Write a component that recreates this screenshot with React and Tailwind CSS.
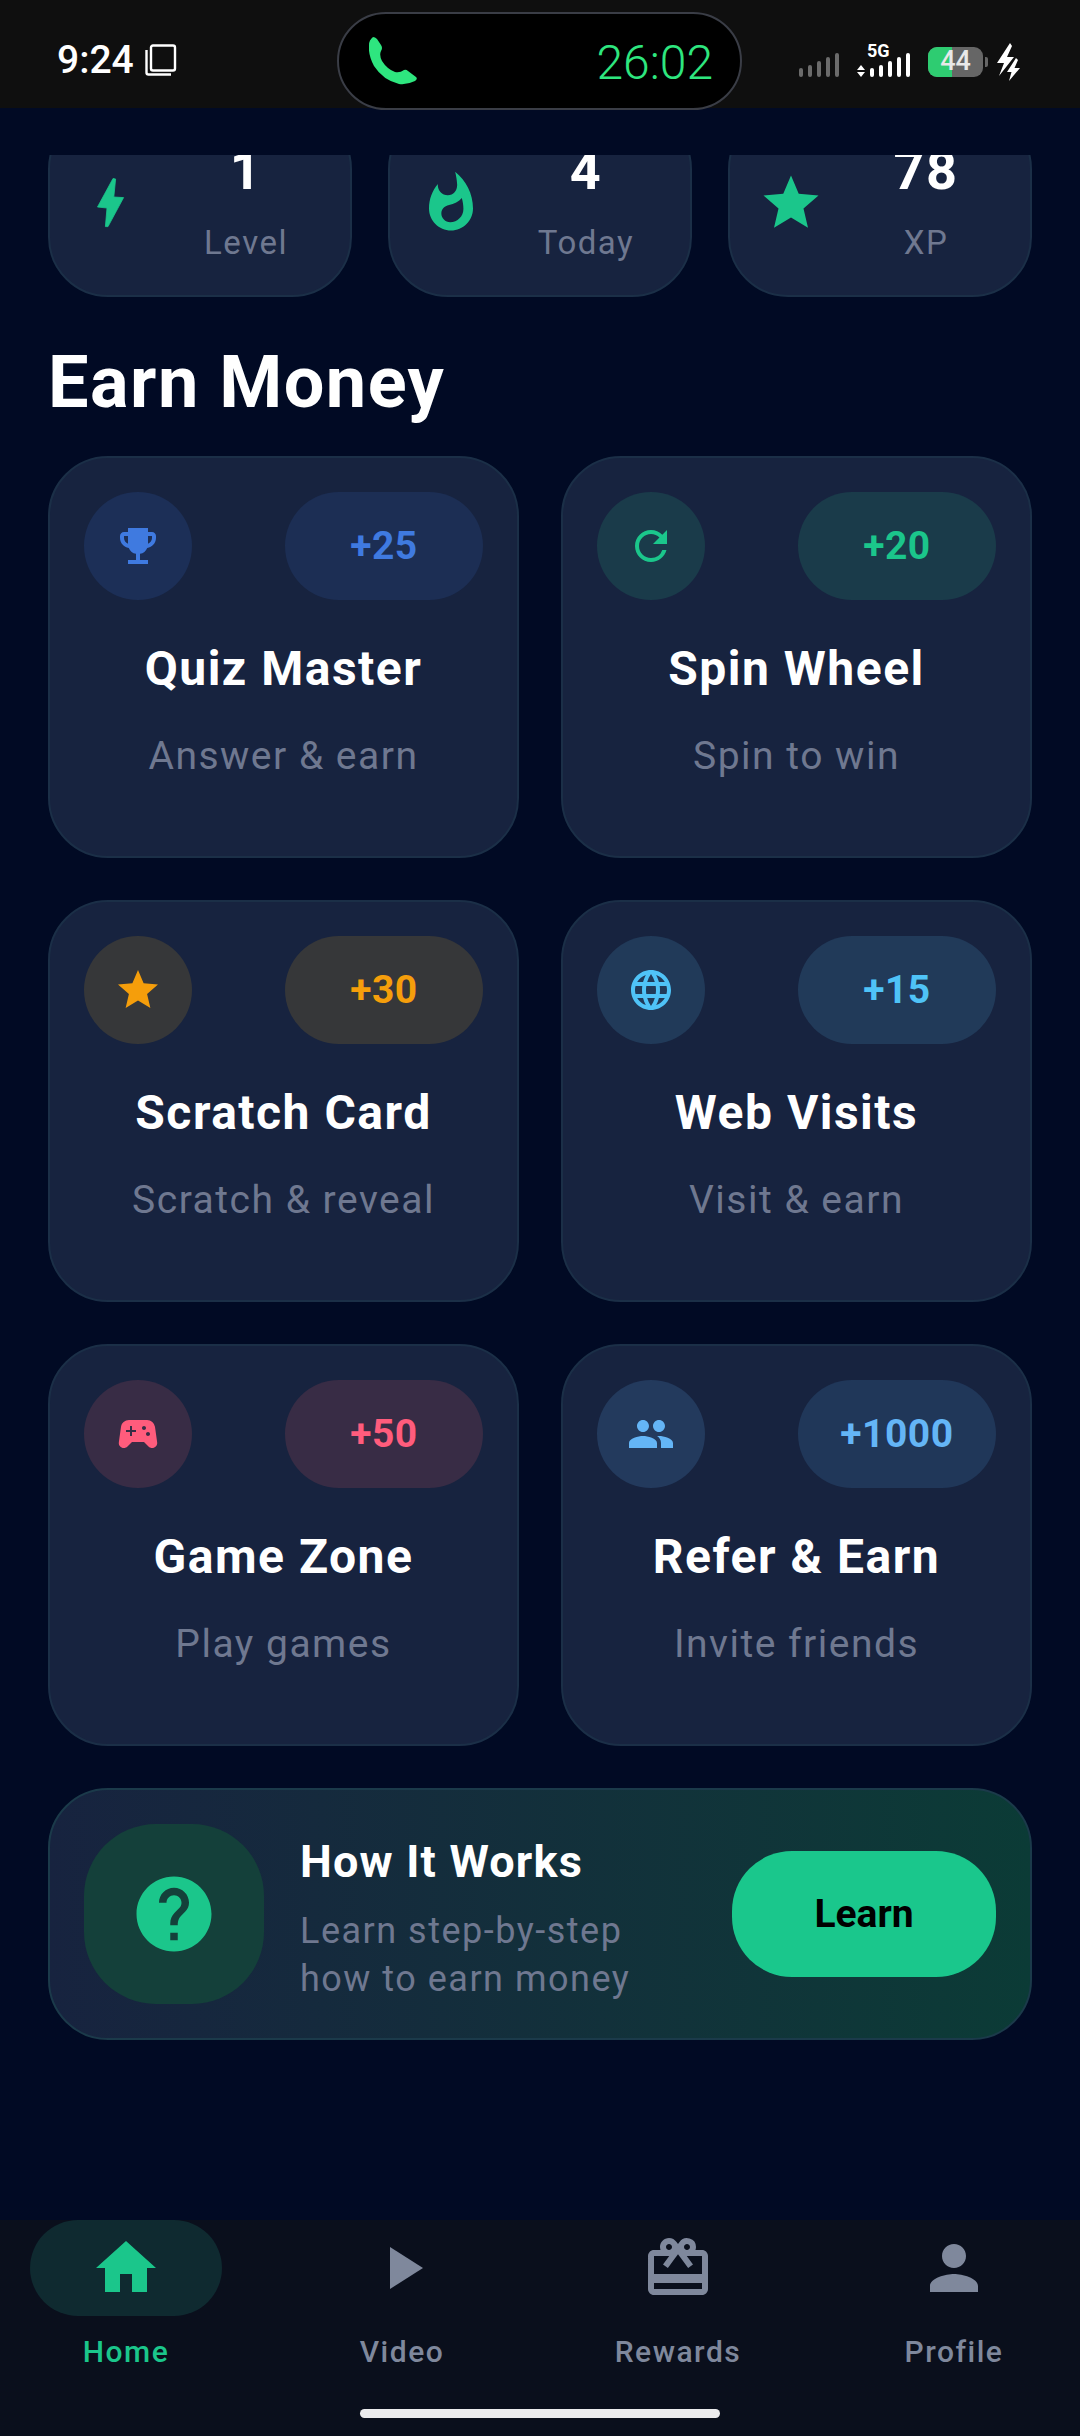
import React from "react";
import { MdEmojiEvents, MdRefresh, MdStar, MdLanguage, MdSportsEsports, MdPeople, MdHelp, MdHome, MdPlayArrow, MdCardGiftcard, MdPerson, MdWhatshot } from "react-icons/md";

const Bolt = ({ className }) => (
  <svg viewBox="-19 -8 66 66" className={className} fill="currentColor" strokeLinejoin="round" stroke="currentColor" strokeWidth="0.8">
    <path d="M16 .5 L18.6 1 L16.8 19 L26.6 19.6 L11 48.6 L8.4 48.6 L10 30 L.5 29Z" />
  </svg>
);

const stats = [
  { icon: <Bolt className="w-[66px] h-[66px] shrink-0" />, value: "1", label: "Level" },
  { icon: <MdWhatshot className="w-[66px] h-[66px] shrink-0" />, value: "4", label: "Today" },
  { icon: <MdStar className="w-[66px] h-[66px] shrink-0" />, value: "78", label: "XP" },
];

const cards = [
  { Icon: MdEmojiEvents, pts: "+25", title: "Quiz Master", sub: "Answer & earn", circle: "bg-[#1c2f57]", pill: "bg-[#1c2e54]", color: "text-[#3f7ae0]" },
  { Icon: MdRefresh, pts: "+20", title: "Spin Wheel", sub: "Spin to win", circle: "bg-[#1a3b4a]", pill: "bg-[#1a3b4a]", color: "text-[#1bc68b]" },
  { Icon: MdStar, pts: "+30", title: "Scratch Card", sub: "Scratch & reveal", circle: "bg-[#363739]", pill: "bg-[#363739]", color: "text-[#f59e0b]" },
  { Icon: MdLanguage, pts: "+15", title: "Web Visits", sub: "Visit & earn", circle: "bg-[#213a59]", pill: "bg-[#213a59]", color: "text-[#4fc3f7]" },
  { Icon: MdSportsEsports, pts: "+50", title: "Game Zone", sub: "Play games", circle: "bg-[#382c45]", pill: "bg-[#382c45]", color: "text-[#ff5c7c]" },
  { Icon: MdPeople, pts: "+1000", title: "Refer & Earn", sub: "Invite friends", circle: "bg-[#233a5d]", pill: "bg-[#203759]", color: "text-[#64b5f6]" },
];

const nav = [
  { Icon: MdHome, label: "Home", active: true },
  { Icon: MdPlayArrow, label: "Video" },
  { Icon: MdCardGiftcard, label: "Rewards" },
  { Icon: MdPerson, label: "Profile" },
];

function StatusBar() {
  return (
    <div className="relative h-[108px] shrink-0 bg-[#0f0f0f] flex items-center justify-between pl-[57px] pr-[60px] pt-[12px] text-white">
      <div className="flex items-center gap-[11px]">
        <span className="text-[39px] leading-none font-medium">9:24</span>
        <svg viewBox="0 0 32 32" className="w-[32px] h-[32px]" fill="none" stroke="#fff" strokeWidth="2.4">
          <rect x="6" y="1.5" width="24" height="25" rx="2" />
          <path d="M1.5 6v22.5a2 2 0 0 0 2 2H26" />
        </svg>
      </div>
      <div className="absolute left-[337px] top-[12px] w-[405px] h-[98px] rounded-full bg-black border-2 border-[#3a3d46] z-10 flex items-center justify-between pl-[30px] pr-[27px]">
        <svg viewBox="0 0 49 48" className="w-[49px] h-[48px]" fill="#2ee67f">
          <path d="M4 0 Q6 0 8 2 L12 8 Q14 11 12 14 Q10 18 13 24 Q18 32 26 35 Q31 36 35 33 Q37 32 39 34 L47 40 Q49 42 46 44 Q38 48 30 47 Q14 43 5 29 Q-1 18 0 8 Q0 3 4 0Z" />
        </svg>
        <span className="text-[48px] leading-none font-[350] text-[#2ee67f] pt-[3px]">26:02</span>
      </div>
      <div className="flex items-end gap-[18px]">
        <svg viewBox="0 0 40 24" className="w-[40px] h-[24px] mb-[1px]" fill="#6b6b6b">
          <rect x="0" y="15" width="4" height="9" rx="2" />
          <rect x="9" y="12" width="4" height="12" rx="2" />
          <rect x="18" y="8" width="4" height="16" rx="2" />
          <rect x="27" y="4" width="4" height="20" rx="2" />
          <rect x="36" y="0" width="4" height="24" rx="2" />
        </svg>
        <div className="relative w-[53px] h-[32px] mb-[1px]">
          <span className="absolute left-[10px] top-[-3px] text-[18px] leading-none font-bold">5G</span>
          <svg viewBox="0 0 53 24" className="absolute left-0 bottom-0 w-[53px] h-[24px]" fill="#fff">
            <path d="M4 12 L8 17 H0Z M4 24 L0 19 H8Z" />
            <rect x="13" y="15" width="4" height="9" rx="2" />
            <rect x="22" y="12" width="4" height="12" rx="2" />
            <rect x="31" y="8" width="4" height="16" rx="2" />
            <rect x="40" y="4" width="4" height="20" rx="2" />
            <rect x="49" y="0" width="4" height="24" rx="2" />
          </svg>
        </div>
        <div className="flex items-center gap-[2px] mb-[1px]">
          <div className="relative w-[55px] h-[30px] rounded-[9px] overflow-hidden bg-[#666666]">
            <div className="h-full w-[24px] bg-[#2ecc71]" />
            <span className="absolute inset-0 flex items-center justify-center text-[27px] leading-none font-medium text-[#e8e8e8]">44</span>
          </div>
          <div className="w-[3px] h-[10px] rounded-r-[2px] bg-[#666666]" />
        </div>
        <svg viewBox="0 0 24 38" className="w-[24px] h-[38px] -ml-[10px] -mb-[3px]" fill="#fff">
          <path d="M14 0 L1 20 H8 L3 33 L18 14 H11 L16 3Z" />
          <path d="M20 15 L11 29 H15.5 L13 38 L24 25 H18.5 L22 17Z" />
        </svg>
      </div>
    </div>
  );
}

export default function App() {
  return (
    <div className="w-[1080px] h-[2436px] flex flex-col overflow-hidden bg-[#010a24] font-['Roboto',sans-serif]">
      <StatusBar />
      <main className="flex-1 px-[48px] pt-[47px]">
        <div className="h-[142px] overflow-hidden flex items-end gap-[36px]">
          {stats.map((s) => (
            <div key={s.label} className="w-[304px] h-[188px] shrink-0 flex items-center gap-[26px] px-[28px] rounded-[60px] bg-[#17233f] border-2 border-[#1b2f47] text-[#1bc68b]">
              {s.icon}
              <div className="flex-1 flex flex-col items-center">
                <span className="text-[54px] leading-[63px] font-bold text-white tracking-[1.5px]">{s.value}</span>
                <span className="text-[33px] leading-[48px] tracking-[1.5px] text-[#6f7890] mt-[17px]">{s.label}</span>
              </div>
            </div>
          ))}
        </div>
        <h1 className="text-[72px] leading-[84px] font-bold text-white mt-[44px] mb-[31px] tracking-[1.5px]">Earn Money</h1>
        <div className="grid grid-cols-2 gap-x-[42px] gap-y-[42px]">
          {cards.map(({ Icon, pts, title, sub, circle, pill, color }) => (
            <div key={title} className="h-[402px] rounded-[60px] bg-[#17233f] border-2 border-[#1b2f47] p-[34px] flex flex-col items-center">
              <div className="w-full flex justify-between">
                <div className={`w-[108px] h-[108px] rounded-full flex items-center justify-center ${circle} ${color}`}>
                  <Icon className="w-[48px] h-[48px]" />
                </div>
                <div className={`w-[198px] h-[108px] rounded-full flex items-center justify-center text-[39px] font-bold tracking-[0.5px] ${pill} ${color}`}>{pts}</div>
              </div>
              <div className="mt-[43px] text-[48px] leading-[52px] font-bold text-white tracking-[1.5px] whitespace-nowrap">{title}</div>
              <div className="mt-[38px] text-[39px] leading-[46px] text-[#6f7890] tracking-[1.5px]">{sub}</div>
            </div>
          ))}
        </div>
        <div className="mt-[42px] h-[252px] rounded-[60px] border-2 border-[#1b3a4a] bg-gradient-to-r from-[#17233f] to-[#0b3b36] px-[34px] flex items-center">
          <div className="w-[180px] h-[180px] shrink-0 rounded-[72px] bg-[#14403a] flex items-center justify-center text-[#1bc68b]">
            <MdHelp className="w-[90px] h-[90px]" />
          </div>
          <div className="flex-1 ml-[36px] mt-[11px]">
            <div className="text-[45px] leading-[52px] font-bold text-white tracking-[1.2px]">How It Works</div>
            <div className="mt-[19px] text-[36px] leading-[48px] text-[#6f7890] tracking-[1.5px]">Learn step-by-step<br />how to earn money</div>
          </div>
          <div className="w-[264px] h-[126px] rounded-[60px] bg-[#1ac78c] flex items-center justify-center text-[39px] font-bold text-black">Learn</div>
        </div>
      </main>
      <nav className="relative h-[216px] shrink-0 bg-[#0a0f1c] flex justify-between items-start pl-[30px] pr-[30px]">
        {nav.map(({ Icon, label, active }) => (
          <div key={label} className={`w-[192px] flex flex-col items-center ${active ? "text-[#1bc68b]" : "text-[#7f889c]"}`}>
            <div className={`w-[192px] h-[96px] rounded-full flex items-center justify-center ${active ? "bg-[#0f2a30]" : ""}`}>
              <Icon className="w-[72px] h-[72px]" />
            </div>
            <span className="mt-[16px] text-[30px] leading-[40px] font-medium tracking-[1.5px]">{label}</span>
          </div>
        ))}
        <div className="absolute left-[360px] top-[189px] w-[360px] h-[9px] rounded-full bg-[#ebebed]" />
      </nav>
    </div>
  );
}
